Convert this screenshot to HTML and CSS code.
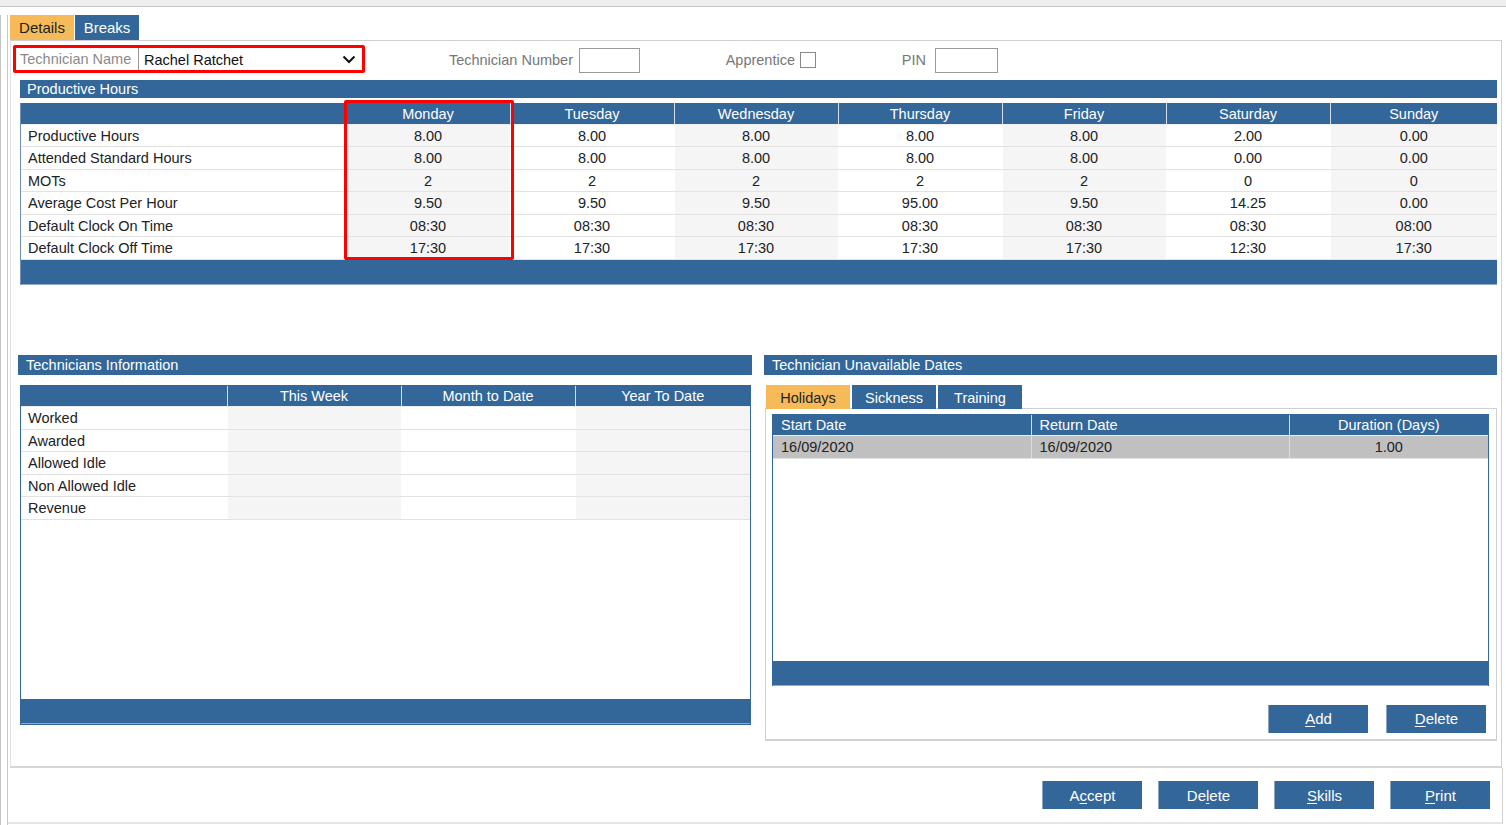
FILE: index.html
```html
<!DOCTYPE html>
<html lang="en">
<head>
    <meta charset="UTF-8">
    <title>Technician Details</title>
    <link rel="stylesheet" href="styles.css">
</head>
<body>
    <div class="topbar"></div>
    <div class="frame">
        <div class="window">
            <!-- Main tabs -->
            <div class="tabs">
                <span class="tab active">Details</span>
                <span class="tab">Breaks</span>
            </div>

            <div class="panel">
                <div class="field-row">
                    <div class="name-field">
                        <span class="name-label">Technician Name</span>
                        <span class="name-value">Rachel Ratchet</span>
                        <svg class="chevron" width="14" height="9" viewBox="0 0 14 9"><polyline points="1.5,1.5 7,7 12.5,1.5" fill="none" stroke="#111" stroke-width="2"/></svg>
                    </div>
                    <span class="field-label num-label">Technician Number</span>
                    <span class="text-box num-box"></span>
                    <span class="field-label app-label">Apprentice</span>
                    <span class="check-box"></span>
                    <span class="field-label pin-label">PIN</span>
                    <span class="text-box pin-box"></span>
                </div>

                <!-- Productive hours -->
                <div class="hours-section">
                    <div class="section-title short">Productive Hours</div>
                    <div class="hours-wrap">
                        <table class="grid hours">
                            <colgroup>
                                <col class="c-label"><col class="c-day"><col class="c-day"><col class="c-day"><col class="c-day"><col class="c-day"><col class="c-day"><col>
                            </colgroup>
                            <thead>
                                <tr><th></th><th>Monday</th><th>Tuesday</th><th>Wednesday</th><th>Thursday</th><th>Friday</th><th>Saturday</th><th>Sunday</th></tr>
                            </thead>
                            <tbody>
                                <tr><td>Productive Hours</td><td>8.00</td><td>8.00</td><td>8.00</td><td>8.00</td><td>8.00</td><td>2.00</td><td>0.00</td></tr>
                                <tr><td>Attended Standard Hours</td><td>8.00</td><td>8.00</td><td>8.00</td><td>8.00</td><td>8.00</td><td>0.00</td><td>0.00</td></tr>
                                <tr><td>MOTs</td><td>2</td><td>2</td><td>2</td><td>2</td><td>2</td><td>0</td><td>0</td></tr>
                                <tr><td>Average Cost Per Hour</td><td>9.50</td><td>9.50</td><td>9.50</td><td>95.00</td><td>9.50</td><td>14.25</td><td>0.00</td></tr>
                                <tr><td>Default Clock On Time</td><td>08:30</td><td>08:30</td><td>08:30</td><td>08:30</td><td>08:30</td><td>08:30</td><td>08:00</td></tr>
                                <tr><td>Default Clock Off Time</td><td>17:30</td><td>17:30</td><td>17:30</td><td>17:30</td><td>17:30</td><td>12:30</td><td>17:30</td></tr>
                            </tbody>
                        </table>
                        <div class="grid-foot"></div>
                        <div class="highlight"></div>
                    </div>
                </div>

                <div class="lower">
                    <!-- Technicians information -->
                    <div class="col col-left">
                        <div class="section-title">Technicians Information</div>
                        <div class="info-box">
                            <table class="grid info">
                                <colgroup>
                                    <col class="c-info-label"><col class="c-info"><col class="c-info"><col>
                                </colgroup>
                                <thead>
                                    <tr><th></th><th>This Week</th><th>Month to Date</th><th>Year To Date</th></tr>
                                </thead>
                                <tbody>
                                    <tr><td>Worked</td><td></td><td></td><td></td></tr>
                                    <tr><td>Awarded</td><td></td><td></td><td></td></tr>
                                    <tr><td>Allowed Idle</td><td></td><td></td><td></td></tr>
                                    <tr><td>Non Allowed Idle</td><td></td><td></td><td></td></tr>
                                    <tr><td>Revenue</td><td></td><td></td><td></td></tr>
                                </tbody>
                            </table>
                            <div class="grid-foot"></div>
                        </div>
                    </div>

                    <!-- Unavailable dates -->
                    <div class="col col-right">
                        <div class="section-title">Technician Unavailable Dates</div>
                        <div class="subtabs">
                            <span class="subtab active">Holidays</span>
                            <span class="subtab">Sickness</span>
                            <span class="subtab">Training</span>
                        </div>
                        <div class="dates-box">
                            <div class="dates-grid">
                                <table class="grid dates">
                                    <colgroup>
                                        <col class="c-date"><col class="c-date2"><col>
                                    </colgroup>
                                    <thead>
                                        <tr><th class="left">Start Date</th><th class="left">Return Date</th><th>Duration (Days)</th></tr>
                                    </thead>
                                    <tbody>
                                        <tr class="selected"><td class="left">16/09/2020</td><td class="left">16/09/2020</td><td>1.00</td></tr>
                                    </tbody>
                                </table>
                                <div class="grid-foot"></div>
                            </div>
                            <div class="btn-row">
                                <button class="btn"><u>A</u>dd</button>
                                <button class="btn"><u>D</u>elete</button>
                            </div>
                        </div>
                    </div>
                </div>
            </div>

            <div class="footer-bar">
                <button class="btn">A<u>c</u>cept</button>
                <button class="btn">De<u>l</u>ete</button>
                <button class="btn"><u>S</u>kills</button>
                <button class="btn"><u>P</u>rint</button>
            </div>
        </div>
    </div>
</body>
</html>
```

FILE: styles.css
```css
/* Base */
* {
    margin: 0;
    padding: 0;
    box-sizing: border-box;
}

body {
    font-family: "Liberation Sans", Arial, sans-serif;
    font-size: 14px;
    color: #222;
    background: #fff;
    width: 1506px;
    height: 825px;
    overflow: hidden;
}

.topbar {
    height: 7px;
    background-color: #eeeeee;
    border-bottom: 1px solid #c8c8c8;
}

.frame {
    height: 818px;
    border-left: 1px solid #c4c4c4;
    padding-left: 6px;
}

.window {
    height: 100%;
    border-left: 1px solid #c8c8c8;
    width: 1495px;
}

/* Tabs */
.tabs {
    display: flex;
    gap: 1px;
    margin: 8px 0 0 2px;
    height: 25px;
}

.tab {
    width: 64px;
    height: 25px;
    line-height: 25px;
    text-align: center;
    font-size: 15px;
    color: #fff;
    background-color: #336699;
}

.tab.active {
    background-color: #f6bb58;
    color: #222;
}

.panel {
    margin-left: 2px;
    width: 1492px;
    height: 728px;
    border: 1px solid #cfcfcf;
    border-bottom: 2px solid #d6d6d6;
    border-left-color: #e0e0e0;
}

/* Top fields */
.field-row {
    display: flex;
    align-items: center;
    height: 28px;
    margin: 4px 0 0 2px;
}

.name-field {
    width: 352px;
    height: 28px;
    border: 3px solid #f00;
    border-radius: 2px;
    display: flex;
    align-items: center;
}

.name-label {
    width: 123px;
    height: 22px;
    line-height: 23px;
    padding-left: 4px;
    color: #8a8a8a;
    border-right: 1px solid #999;
    font-size: 14.5px;
}

.name-value {
    padding-left: 5px;
    padding-top: 1px;
    font-size: 14.5px;
    color: #111;
    flex: 1;
}

.chevron {
    margin-right: 6px;
}

.field-label {
    color: #777;
    text-align: right;
    font-size: 14.5px;
    padding-top: 2px;
}

.num-label {
    width: 208px;
    margin-right: 6px;
}

.text-box {
    height: 25px;
    margin-top: 2px;
    border: 1px solid #9a9a9a;
    background: #fff;
}

.num-box {
    width: 61px;
}

.app-label {
    width: 155px;
    margin-right: 5px;
}

.check-box {
    width: 16px;
    height: 16px;
    margin-top: 2px;
    border: 1px solid #888;
}

.pin-label {
    width: 110px;
    margin-right: 9px;
}

.pin-box {
    width: 63px;
}

/* Section titles */
.section-title {
    height: 20px;
    line-height: 21px;
    background-color: #336699;
    color: #fff;
    padding-left: 8px;
    font-size: 14.5px;
}

.section-title.short {
    height: 18px;
    line-height: 19px;
    padding-left: 7px;
}

/* Productive hours */
.hours-section {
    margin: 7px 0 0 9px;
    width: 1477px;
}

.hours-wrap {
    margin-top: 5px;
    position: relative;
    border-left: 1px solid #6f8fb4;
}

.grid {
    width: 100%;
    border-collapse: collapse;
    table-layout: fixed;
}

.grid th {
    background-color: #336699;
    color: #fff;
    font-weight: normal;
    font-size: 14.5px;
    height: 21px;
    padding-top: 1px;
    text-align: center;
    border-left: 1px solid #d4dde8;
}

.grid th:first-child {
    border-left: none;
}

.grid td {
    height: 22.5px;
    text-align: center;
    font-size: 14.5px;
    border-bottom: 1px solid #e2e2e2;
    border-top: 1px solid #eeeeee;
    border-left: 1px solid #fff;
    padding-top: 1px;
}

.grid td:first-child {
    text-align: left;
    padding-left: 7px;
    border-left: none;
}

.hours td:nth-child(even) {
    background-color: #f5f5f5;
}

.c-label {
    width: 325px;
}

.c-day {
    width: 164px;
}

.grid-foot {
    height: 25px;
    background-color: #336699;
    border-bottom: 1px solid #8fa9c8;
}

.highlight {
    position: absolute;
    left: 323px;
    top: -3px;
    width: 170px;
    height: 160px;
    border: 3px solid #f00;
    border-radius: 2px;
}

/* Lower area */
.lower {
    display: flex;
    gap: 12px;
    margin: 70px 0 0 7px;
}

.col-left {
    width: 734px;
}

.col-right {
    width: 733px;
}

.info-box {
    margin: 10px 0 0 2px;
    width: 731px;
    height: 340px;
    border: 1px solid #336699;
    display: flex;
    flex-direction: column;
    justify-content: space-between;
}

.info td:nth-child(2),
.info td:nth-child(4) {
    background-color: #f5f5f5;
}

.c-info-label {
    width: 206px;
}

.c-info {
    width: 174px;
}

/* Unavailable dates */
.subtabs {
    display: flex;
    gap: 2px;
    margin: 10px 0 0 2px;
    height: 24px;
}

.subtab {
    width: 84px;
    height: 24px;
    line-height: 27px;
    text-align: center;
    font-size: 14.5px;
    color: #fff;
    background-color: #336699;
}

.subtab.active {
    background-color: #f6bb58;
    color: #222;
}

.dates-box {
    margin: -1px 0 0 1px;
    width: 732px;
    height: 333px;
    border: 1px solid #cfcfcf;
    border-bottom: 2px solid #d2d2d2;
    padding: 5px 7px 0 6px;
}

.dates-grid {
    height: 272px;
    border: 1px solid #336699;
    border-bottom: none;
    display: flex;
    flex-direction: column;
    justify-content: space-between;
}

.dates th.left,
.dates td.left {
    text-align: left;
    padding-left: 8px;
}

.c-date {
    width: 258px;
}

.c-date2 {
    width: 258px;
}

.dates tr.selected td {
    background-color: #c0c0c0;
    border-left-color: #dcdcdc;
}

.btn-row {
    display: flex;
    justify-content: flex-end;
    gap: 18px;
    margin-top: 19px;
    padding-right: 3px;
}

/* Buttons */
.btn {
    width: 100px;
    height: 28px;
    border: none;
    border-left: 1px solid #8aa5c4;
    background-color: #336699;
    color: #fff;
    font-family: "Liberation Sans", Arial, sans-serif;
    font-size: 15px;
    cursor: pointer;
}

.btn u {
    text-decoration-thickness: 1px;
    text-underline-offset: 2px;
}

.footer-bar {
    display: flex;
    justify-content: flex-end;
    gap: 16px;
    height: 56px;
    padding: 13px 12px 0 0;
    width: 1495px;
    border-right: 1px solid #cfcfcf;
    border-bottom: 2px solid #e6e6e6;
}
```
